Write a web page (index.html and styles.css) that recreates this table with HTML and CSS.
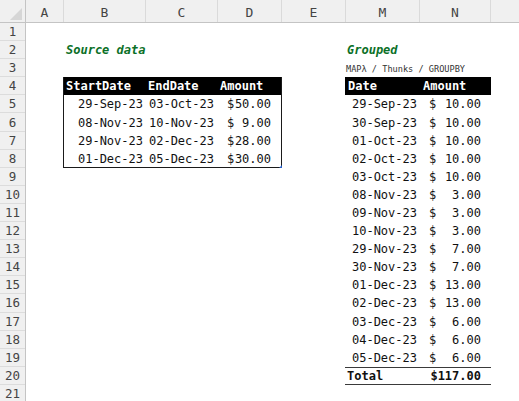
FILE: index.html
```html
<!DOCTYPE html>
<html>
<head>
<meta charset="utf-8">
<link rel="stylesheet" href="styles.css">
</head>
<body>
<div class="sheet">
  <div class="colhead">
    <div class="corner"><span class="tri"></span></div>
    <div class="ch w-a">A</div>
    <div class="ch w-b">B</div>
    <div class="ch w-c">C</div>
    <div class="ch w-d">D</div>
    <div class="ch w-e">E</div>
    <div class="ch w-m">M</div>
    <div class="ch w-n">N</div>
    <div class="ch w-rest"></div>
  </div>
  <div class="body">
    <div class="rowhead">
      <div class="rh">1</div><div class="rh">2</div><div class="rh">3</div><div class="rh">4</div>
      <div class="rh">5</div><div class="rh">6</div><div class="rh">7</div><div class="rh">8</div>
      <div class="rh">9</div><div class="rh">10</div><div class="rh">11</div><div class="rh">12</div>
      <div class="rh">13</div><div class="rh">14</div><div class="rh">15</div><div class="rh">16</div>
      <div class="rh">17</div><div class="rh">18</div><div class="rh">19</div><div class="rh">20</div>
      <div class="rh">21</div>
    </div>
    <div class="cells">
      <div class="title src-title">Source data</div>
      <div class="title grp-title">Grouped</div>
      <div class="note">MAPλ / Thunks / GROUPBY</div>

      <div class="src">
        <div class="hd">StartDate</div><div class="hd">EndDate</div><div class="hd">Amount</div>
        <div class="dt">29-Sep-23</div><div class="dt">03-Oct-23</div><div class="acc"><span>$</span><span>50.00</span></div>
        <div class="dt">08-Nov-23</div><div class="dt">10-Nov-23</div><div class="acc"><span>$</span><span>9.00</span></div>
        <div class="dt">29-Nov-23</div><div class="dt">02-Dec-23</div><div class="acc"><span>$</span><span>28.00</span></div>
        <div class="dt">01-Dec-23</div><div class="dt">05-Dec-23</div><div class="acc"><span>$</span><span>30.00</span></div>
        <span class="handle"></span>
      </div>

      <div class="grp">
        <div class="hd">Date</div><div class="hd">Amount</div>
        <div class="dt">29-Sep-23</div><div class="acc"><span>$</span><span>10.00</span></div>
        <div class="dt">30-Sep-23</div><div class="acc"><span>$</span><span>10.00</span></div>
        <div class="dt">01-Oct-23</div><div class="acc"><span>$</span><span>10.00</span></div>
        <div class="dt">02-Oct-23</div><div class="acc"><span>$</span><span>10.00</span></div>
        <div class="dt">03-Oct-23</div><div class="acc"><span>$</span><span>10.00</span></div>
        <div class="dt">08-Nov-23</div><div class="acc"><span>$</span><span>3.00</span></div>
        <div class="dt">09-Nov-23</div><div class="acc"><span>$</span><span>3.00</span></div>
        <div class="dt">10-Nov-23</div><div class="acc"><span>$</span><span>3.00</span></div>
        <div class="dt">29-Nov-23</div><div class="acc"><span>$</span><span>7.00</span></div>
        <div class="dt">30-Nov-23</div><div class="acc"><span>$</span><span>7.00</span></div>
        <div class="dt">01-Dec-23</div><div class="acc"><span>$</span><span>13.00</span></div>
        <div class="dt">02-Dec-23</div><div class="acc"><span>$</span><span>13.00</span></div>
        <div class="dt">03-Dec-23</div><div class="acc"><span>$</span><span>6.00</span></div>
        <div class="dt">04-Dec-23</div><div class="acc"><span>$</span><span>6.00</span></div>
        <div class="dt">05-Dec-23</div><div class="acc"><span>$</span><span>6.00</span></div>
        <div class="tot lbl">Total</div><div class="tot acc"><span>$117.00</span></div>
      </div>
    </div>
  </div>
</div>
</body>
</html>
```

FILE: styles.css
```css
* { box-sizing: border-box; }
html, body { margin: 0; padding: 0; background: #fff; }
body {
  width: 519px;
  height: 401px;
  overflow: hidden;
  font-family: "DejaVu Sans Mono", monospace;
  font-size: 12px;
  color: #111;
}
.sheet { width: 519px; }

.colhead {
  display: flex;
  height: 23px;
  background: #f0f0f0;
  border-bottom: 1px solid #c4c4c4;
}
.corner {
  width: 26px;
  border-right: 1px solid #c4c4c4;
  position: relative;
}
.tri {
  position: absolute;
  right: 3px;
  bottom: 2px;
  width: 0;
  height: 0;
  border-left: 12px solid transparent;
  border-bottom: 12px solid #d6d6d6;
}
.ch {
  display: flex;
  align-items: center;
  justify-content: center;
  padding-top: 3px;
  border-right: 1px solid #dadada;
  color: #444;
  font-size: 13px;
  flex: none;
}
.w-a { width: 38px; }
.w-b { width: 82px; }
.w-c { width: 72px; }
.w-d { width: 64px; }
.w-e { width: 64px; }
.w-m { width: 74px; }
.w-n { width: 71px; }
.w-rest { flex: 1; border-right: none; }

.body { display: flex; }
.rowhead {
  width: 26px;
  flex: none;
  background: #f0f0f0;
  border-right: 1px solid #c4c4c4;
}
.rh {
  height: 18.1px;
  border-bottom: 1px solid #dcdcdc;
  display: flex;
  align-items: center;
  justify-content: center;
  color: #444;
  font-size: 12.5px;
}

.cells {
  flex: 1;
  display: grid;
  grid-template-columns: 38px 82px 72px 64px 64px 74px 71px 1fr;
  grid-template-rows: repeat(21, 18.1px);
}

.title {
  grid-row: 2;
  font-weight: bold;
  font-style: italic;
  color: #0b7027;
  white-space: nowrap;
  display: flex;
  align-items: center;
  padding-left: 2px;
}
.src-title { grid-column: 2; }
.grp-title { grid-column: 6; padding-left: 1px; }

.note {
  grid-column: 6 / 8;
  grid-row: 3;
  font-size: 8.6px;
  color: #333;
  display: flex;
  align-items: flex-end;
  padding-bottom: 3px;
  white-space: nowrap;
}

.src {
  grid-column: 2 / 5;
  grid-row: 4 / 9;
  margin-left: -1px;
  display: grid;
  grid-template-columns: 82px 72px 63px;
  grid-template-rows: repeat(5, 18.1px);
  border: 1px solid #1a1a1a;
  border-top: none;
  position: relative;
}
.grp {
  grid-column: 6 / 8;
  grid-row: 4 / 21;
  margin-left: -1px;
  display: grid;
  grid-template-columns: 75px 71px;
  grid-template-rows: repeat(17, 18.1px);
}

.hd {
  background: #000;
  color: #fff;
  font-weight: bold;
  display: flex;
  align-items: center;
  padding-left: 2px;
  white-space: nowrap;
}
.grp .hd { padding-left: 3px; }

.dt {
  display: flex;
  align-items: center;
  justify-content: flex-end;
  padding-right: 3px;
  white-space: nowrap;
}
.src .dt:nth-child(3n+2) { padding-right: 4px; }

.acc {
  display: flex;
  align-items: center;
  justify-content: space-between;
  padding-left: 9px;
  padding-right: 10px;
  white-space: nowrap;
}

.tot {
  border-top: 1px solid #3a3a3a;
  border-bottom: 1px solid #3a3a3a;
  font-weight: bold;
}
.lbl {
  display: flex;
  align-items: center;
  padding-left: 2px;
}
.tot.acc { justify-content: flex-end; }

.handle {
  position: absolute;
  right: -1px;
  bottom: -1px;
  width: 0;
  height: 0;
  border-left: 3px solid transparent;
  border-bottom: 3px solid #2a62c9;
}
```
